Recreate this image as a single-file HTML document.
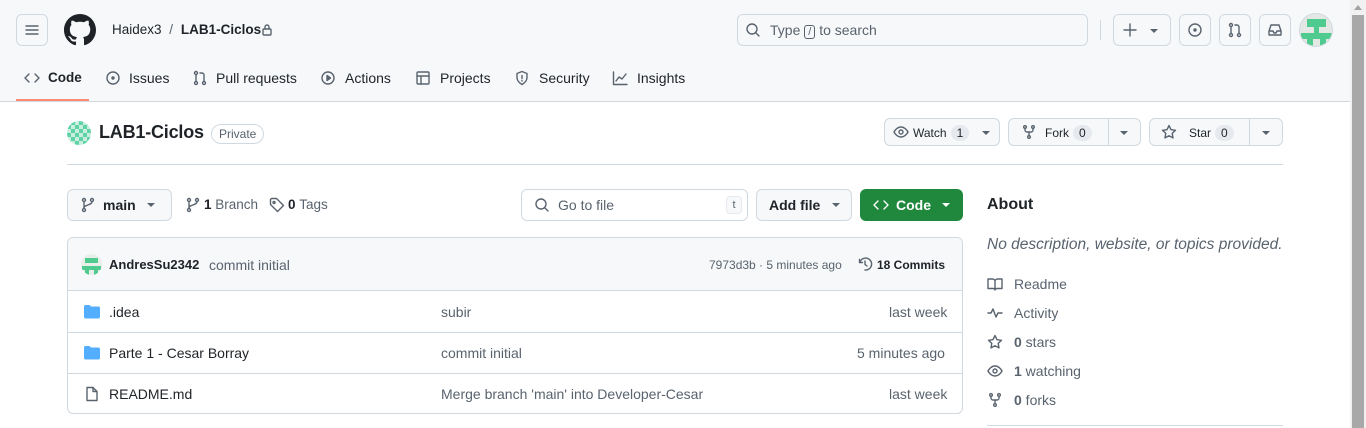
<!DOCTYPE html>
<html><head><meta charset="utf-8"><style>
*{box-sizing:border-box;margin:0;padding:0}
body{width:1366px;height:428px;overflow:hidden;background:#fff;font-family:"Liberation Sans",sans-serif;font-size:14px;color:#1f2328;position:relative}
.a{position:absolute;white-space:nowrap}
.btn{position:absolute;border:1px solid #d1d9e0;border-radius:6px;background:#f6f8fa}
.ic{position:absolute;fill:none;stroke:#59636e;stroke-width:1.4;stroke-linecap:round;stroke-linejoin:round}
.g{color:#59636e}
.cnt{display:inline-block;background:#e6eaef;border-radius:10px;padding:1px 6px;font-size:12px;margin-left:4px}
.caret{position:absolute;width:0;height:0;border-left:4px solid transparent;border-right:4px solid transparent;border-top:4px solid #59636e}
</style></head><body>
<div class="a" style="left:0;top:0;width:1350px;height:102px;background:#f6f8fa;border-bottom:1px solid #d1d9e0"></div>
<div class="btn" style="left:16px;top:14px;width:32px;height:32px"></div>
<svg class="ic" style="left:24px;top:22px" width="16" height="16"><path d="M2 4h12M2 8h12M2 12h12"/></svg>
<svg class="a" style="left:64px;top:14px" width="32" height="32" viewBox="0 0 16 16"><path fill="#1f2328" d="M8 0C3.58 0 0 3.58 0 8c0 3.540 2.29 6.53 5.47 7.59.4.07.55-.17.55-.38 0-.19-.01-.82-.01-1.49-2.01.37-2.53-.49-2.69-.94-.09-.23-.48-.94-.82-1.13-.28-.15-.68-.52-.01-.53.63-.01 1.08.58 1.230.82.72 1.21 1.87.87 2.33.66.07-.52.28-.87.51-1.07-1.78-.2-3.64-.89-3.64-3.95 0-.87.31-1.59.82-2.15-.08-.2-.36-1.02.08-2.12 0 0 .67-.21 2.2.82.64-.18 1.32-.27 2-.27.68 0 1.36.09 2 .27 1.53-1.04 2.2-.82 2.2-.82.44 1.1.16 1.92.08 2.12.51.56.82 1.27.82 2.15 0 3.07-1.87 3.75-3.65 3.95.29.25.54.73.54 1.48 0 1.07-.01 1.93-.01 2.2 0 .21.15.46.55.38A8.013 8.013 0 0016 8c0-4.42-3.58-8-8-8z"/></svg>
<div class="a" style="left:112px;top:22px;font-size:13.5px">Haidex3 <span class="g" style="margin:0 4px">/</span> <span style="font-weight:600">LAB1-Ciclos</span></div>
<svg class="ic" style="left:261px;top:23px" width="12" height="14"><rect x="2" y="6" width="8" height="6" rx="1"/><path d="M4 6V4a2 2 0 014 0v2"/></svg>
<div class="btn" style="left:737px;top:14px;width:351px;height:32px"></div>
<svg class="ic" style="left:745px;top:22px" width="16" height="16"><circle cx="7" cy="7" r="5"/><path d="M11 11l3 3"/></svg>
<div class="a g" style="left:770px;top:22px">Type <span style="border:1px solid #59636e;border-radius:3px;padding:0 3px;font-size:11px">/</span> to search</div>
<div class="a" style="left:1100px;top:20px;width:1px;height:20px;background:#d1d9e0"></div>
<div class="btn" style="left:1113px;top:14px;width:58px;height:32px"></div>
<svg class="ic" style="left:1122px;top:22px" width="16" height="16"><path d="M8 2v12M2 8h12"/></svg>
<div class="caret" style="left:1150px;top:29px"></div>
<div class="btn" style="left:1179px;top:14px;width:32px;height:32px"></div>
<svg class="ic" style="left:1187px;top:22px" width="16" height="16"><circle cx="8" cy="8" r="6"/><circle cx="8" cy="8" r="1" fill="#59636e"/></svg>
<div class="btn" style="left:1219px;top:14px;width:32px;height:32px"></div>
<svg class="ic" style="left:1227px;top:22px" width="16" height="16"><circle cx="4" cy="3" r="1.5"/><circle cx="4" cy="13" r="1.5"/><circle cx="12" cy="13" r="1.5"/><path d="M4 5v6M12 11V5a2 2 0 00-2-2H8"/></svg>
<div class="btn" style="left:1259px;top:14px;width:32px;height:32px"></div>
<svg class="ic" style="left:1267px;top:22px" width="16" height="16"><path d="M2 9l2-6h8l2 6v4H2zM2 9h4l1 2h2l1-2h4"/></svg>
<div class="a" style="left:1299px;top:13px;width:34px;height:34px;border-radius:50%;background:#e3e8e5;border:1px solid #d1d9e0;overflow:hidden">
<div class="a" style="left:7px;top:5px;width:19px;height:8px;background:#4fcb8f"></div>
<div class="a" style="left:14px;top:13px;width:5px;height:6px;background:#4fcb8f"></div>
<div class="a" style="left:1px;top:19px;width:31px;height:6px;background:#4fcb8f"></div>
<div class="a" style="left:7px;top:25px;width:6px;height:8px;background:#4fcb8f"></div>
<div class="a" style="left:20px;top:25px;width:6px;height:8px;background:#4fcb8f"></div>
</div>
<svg class="ic" style="left:24px;top:70px" width="16" height="16"><path d="M5 4L1 8l4 4M11 4l4 4-4 4"/></svg>
<div class="a" style="left:48px;top:70px;font-weight:600;font-size:13.5px">Code</div>
<div class="a" style="left:16px;top:99px;width:73px;height:2px;background:#fd8c73"></div>
<svg class="ic" style="left:105px;top:70px" width="16" height="16"><circle cx="8" cy="8" r="6"/><circle cx="8" cy="8" r="1" fill="#59636e"/></svg>
<div class="a" style="left:129px;top:70px">Issues</div>
<svg class="ic" style="left:192px;top:70px" width="16" height="16"><circle cx="4" cy="3" r="1.5"/><circle cx="4" cy="13" r="1.5"/><circle cx="12" cy="13" r="1.5"/><path d="M4 5v6M12 11V5a2 2 0 00-2-2H8"/></svg>
<div class="a" style="left:216px;top:70px">Pull requests</div>
<svg class="ic" style="left:320px;top:70px" width="16" height="16"><circle cx="8" cy="8" r="6"/><path d="M7 5.5v5l3.5-2.5z" fill="#59636e"/></svg>
<div class="a" style="left:345px;top:70px">Actions</div>
<svg class="ic" style="left:415px;top:70px" width="16" height="16"><rect x="2" y="2" width="12" height="12" rx="1"/><path d="M2 6h12M6 6v8"/></svg>
<div class="a" style="left:440px;top:70px">Projects</div>
<svg class="ic" style="left:514px;top:70px" width="16" height="16"><path d="M8 1.5L3 3.5v4c0 3.5 2.5 5.5 5 7 2.5-1.5 5-3.5 5-7v-4z"/><path d="M8 5.5v3M8 10.5v.5"/></svg>
<div class="a" style="left:539px;top:70px">Security</div>
<svg class="ic" style="left:612px;top:70px" width="16" height="16"><path d="M1.5 2v12.5H15M4 11l3-4 3 2 4-5"/></svg>
<div class="a" style="left:637px;top:70px">Insights</div>
<div class="a" style="left:67px;top:121px;width:24px;height:24px;border-radius:50%;background:repeating-conic-gradient(#5fd3a7 0 25%,#c8eedd 0 50%) 0 0/8px 8px"></div>
<div class="a" style="left:99px;top:122px;font-size:18px;font-weight:600;letter-spacing:-0.2px">LAB1-Ciclos</div>
<div class="a g" style="left:211px;top:124px;border:1px solid #d1d9e0;border-radius:12px;padding:2px 7px;font-size:12px">Private</div>
<div class="btn" style="left:884px;top:118px;width:116px;height:28px"></div>
<svg class="ic" style="left:893px;top:124px" width="16" height="16"><path d="M1 8s2.5-5 7-5 7 5 7 5-2.5 5-7 5-7-5-7-5z"/><circle cx="8" cy="8" r="2"/></svg>
<div class="a" style="left:913px;top:125px;font-size:12px">Watch<span class="cnt">1</span></div>
<div class="caret" style="left:982px;top:131px"></div>
<div class="btn" style="left:1008px;top:118px;width:133px;height:28px"></div>
<div class="a" style="left:1108px;top:118px;width:1px;height:28px;background:#d1d9e0"></div>
<svg class="ic" style="left:1021px;top:124px" width="16" height="16"><circle cx="4" cy="3" r="1.3"/><circle cx="12" cy="3" r="1.3"/><circle cx="8" cy="13" r="1.3"/><path d="M4 4.5v1.5a2 2 0 002 2h4a2 2 0 002-2V4.5M8 8v3.5"/></svg>
<div class="a" style="left:1045px;top:125px;font-size:12px">Fork<span class="cnt">0</span></div>
<div class="caret" style="left:1120px;top:131px"></div>
<div class="btn" style="left:1149px;top:118px;width:134px;height:28px"></div>
<div class="a" style="left:1249px;top:118px;width:1px;height:28px;background:#d1d9e0"></div>
<svg class="ic" style="left:1161px;top:124px" width="16" height="16"><path d="M8 1.5l2 4.2 4.5.6-3.3 3.1.8 4.5L8 11.8 4 13.9l.8-4.5L1.5 6.3 6 5.7z"/></svg>
<div class="a" style="left:1189px;top:125px;font-size:12px">Star<span class="cnt">0</span></div>
<div class="caret" style="left:1262px;top:131px"></div>
<div class="a" style="left:67px;top:164px;width:1216px;height:1px;background:#d1d9e0"></div>
<div class="btn" style="left:67px;top:189px;width:105px;height:32px"></div>
<svg class="ic" style="left:80px;top:197px" width="16" height="16"><circle cx="4" cy="3" r="1.5"/><circle cx="4" cy="13" r="1.5"/><circle cx="12" cy="3" r="1.5"/><path d="M4 4.5v7M12 4.5c0 4-8 3-8 6.5"/></svg>
<div class="a" style="left:103px;top:197px;font-weight:600">main</div>
<div class="caret" style="left:147px;top:203px"></div>
<svg class="ic" style="left:185px;top:197px" width="16" height="16"><circle cx="4" cy="3" r="1.5"/><circle cx="4" cy="13" r="1.5"/><circle cx="12" cy="3" r="1.5"/><path d="M4 4.5v7M12 4.5c0 4-8 3-8 6.5"/></svg>
<div class="a" style="left:204px;top:197px;font-weight:600;font-size:13.5px">1 <span style="font-weight:400;color:#59636e">Branch</span></div>
<svg class="ic" style="left:269px;top:197px" width="16" height="16"><path d="M1.5 2.5v5l7 7 6-6-7-7h-5z"/><circle cx="5" cy="5.5" r="1"/></svg>
<div class="a" style="left:288px;top:197px;font-weight:600;font-size:13.5px">0 <span style="font-weight:400;color:#59636e">Tags</span></div>
<div class="a" style="left:521px;top:189px;width:227px;height:32px;border:1px solid #d1d9e0;border-radius:6px;background:#fff"></div>
<svg class="ic" style="left:534px;top:197px" width="16" height="16"><circle cx="7" cy="7" r="5"/><path d="M11 11l3 3"/></svg>
<div class="a g" style="left:558px;top:197px">Go to file</div>
<div class="a g" style="left:726px;top:196px;width:16px;height:18px;border:1px solid #e6eaef;border-radius:4px;background:#f6f8fa;font-size:11px;text-align:center;line-height:16px">t</div>
<div class="btn" style="left:756px;top:189px;width:96px;height:32px"></div>
<div class="a" style="left:769px;top:197px;font-weight:600">Add file</div>
<div class="caret" style="left:832px;top:203px"></div>
<div class="a" style="left:860px;top:189px;width:103px;height:32px;border-radius:6px;background:#1f883d"></div>
<svg class="ic" style="left:873px;top:197px;stroke:#fff" width="16" height="16"><path d="M5 4L1 8l4 4M11 4l4 4-4 4"/></svg>
<div class="a" style="left:896px;top:197px;font-weight:600;color:#fff">Code</div>
<div class="caret" style="left:942px;top:203px;border-top-color:#fff"></div>
<div class="a" style="left:67px;top:237px;width:896px;height:177px;border:1px solid #d1d9e0;border-radius:6px;overflow:hidden">
<div class="a" style="left:0;top:0;width:896px;height:53px;background:#f6f8fa;border-bottom:1px solid #d1d9e0"></div>
<div class="a" style="left:0;top:94px;width:896px;height:1px;background:#d1d9e0"></div>
<div class="a" style="left:0;top:135px;width:896px;height:1px;background:#d1d9e0"></div>
</div>
<div class="a" style="left:81px;top:254px;width:21px;height:21px;border-radius:50%;background:#e8efe9;overflow:hidden"><div class="a" style="left:4px;top:4px;width:13px;height:5px;background:#4fcb8f"></div><div class="a" style="left:1px;top:12px;width:19px;height:4px;background:#4fcb8f"></div><div class="a" style="left:4px;top:16px;width:4px;height:5px;background:#4fcb8f"></div><div class="a" style="left:13px;top:16px;width:4px;height:5px;background:#4fcb8f"></div></div>
<div class="a" style="left:109px;top:257px;font-weight:600;font-size:13px">AndresSu2342</div>
<div class="a g" style="left:209px;top:257px">commit initial</div>
<div class="a g" style="left:709px;top:258px;font-size:12px">7973d3b · 5 minutes ago</div>
<svg class="ic" style="left:857px;top:256px" width="16" height="16"><path d="M2.5 3.5v3h3"/><path d="M2.8 6.5A6 6 0 118 14"/><path d="M8 5v3.5l2 1.5"/></svg>
<div class="a" style="left:877px;top:258px;font-size:12px;font-weight:600">18 Commits</div>
<svg class="a" style="left:84px;top:304px" width="16" height="16"><path fill="#54aeff" d="M0 2.5C0 1.7.7 1 1.5 1h4l1.5 1.5h7.5c.8 0 1.5.7 1.5 1.5v9c0 .8-.7 1.5-1.5 1.5h-13C.7 14.5 0 13.8 0 13z"/></svg>
<div class="a" style="left:109px;top:304px">.idea</div>
<div class="a g" style="left:441px;top:304px">subir</div>
<div class="a g" style="left:889px;top:304px">last week</div>
<svg class="a" style="left:84px;top:345px" width="16" height="16"><path fill="#54aeff" d="M0 2.5C0 1.7.7 1 1.5 1h4l1.5 1.5h7.5c.8 0 1.5.7 1.5 1.5v9c0 .8-.7 1.5-1.5 1.5h-13C.7 14.5 0 13.8 0 13z"/></svg>
<div class="a" style="left:109px;top:345px">Parte 1 - Cesar Borray</div>
<div class="a g" style="left:441px;top:345px">commit initial</div>
<div class="a g" style="left:857px;top:345px">5 minutes ago</div>
<svg class="ic" style="left:84px;top:386px" width="16" height="16"><path d="M3 1.5h6l4 4v9H3z M9 1.5v4h4"/></svg>
<div class="a" style="left:109px;top:386px">README.md</div>
<div class="a g" style="left:441px;top:386px">Merge branch 'main' into Developer-Cesar</div>
<div class="a g" style="left:889px;top:386px">last week</div>
<div class="a" style="left:987px;top:196px;font-size:16px;font-weight:600">About</div>
<div class="a g" style="left:987px;top:236px;font-size:15.5px;font-style:italic">No description, website, or topics provided.</div>
<svg class="ic" style="left:987px;top:276px" width="16" height="16"><path d="M1 3h4.5c1.3 0 2.5 1 2.5 2v9c0-1-1-1.5-2-1.5H1zM15 3h-4.5C9.2 3 8 4 8 5v9c0-1 1-1.5 2-1.5h5z"/></svg>
<div class="a g" style="left:1014px;top:276px">Readme</div>
<svg class="ic" style="left:987px;top:305px" width="16" height="16"><path d="M1 8h3l2-4 3 8 2-4h4"/></svg>
<div class="a g" style="left:1014px;top:305px">Activity</div>
<svg class="ic" style="left:987px;top:334px" width="16" height="16"><path d="M8 1.5l2 4.2 4.5.6-3.3 3.1.8 4.5L8 11.8 4 13.9l.8-4.5L1.5 6.3 6 5.7z"/></svg>
<div class="a g" style="left:1014px;top:334px"><b>0</b> stars</div>
<svg class="ic" style="left:987px;top:363px" width="16" height="16"><path d="M1 8s2.5-5 7-5 7 5 7 5-2.5 5-7 5-7-5-7-5z"/><circle cx="8" cy="8" r="2"/></svg>
<div class="a g" style="left:1014px;top:363px"><b>1</b> watching</div>
<svg class="ic" style="left:987px;top:392px" width="16" height="16"><circle cx="4" cy="3" r="1.3"/><circle cx="12" cy="3" r="1.3"/><circle cx="8" cy="13" r="1.3"/><path d="M4 4.5v1.5a2 2 0 002 2h4a2 2 0 002-2V4.5M8 8v3.5"/></svg>
<div class="a g" style="left:1014px;top:392px"><b>0</b> forks</div>
<div class="a" style="left:987px;top:425px;width:296px;height:1px;background:#d1d9e0"></div>
<div class="a" style="left:1350px;top:0;width:16px;height:428px;background:#f1f1f1;z-index:5"></div>
<div class="a" style="left:1354px;top:5px;width:0;height:0;border-left:4px solid transparent;border-right:4px solid transparent;border-bottom:5px solid #a3a3a3;z-index:6"></div>
<div class="a" style="left:1352px;top:15px;width:12px;height:413px;background:#a8a8a8;z-index:6"></div>
</body></html>
